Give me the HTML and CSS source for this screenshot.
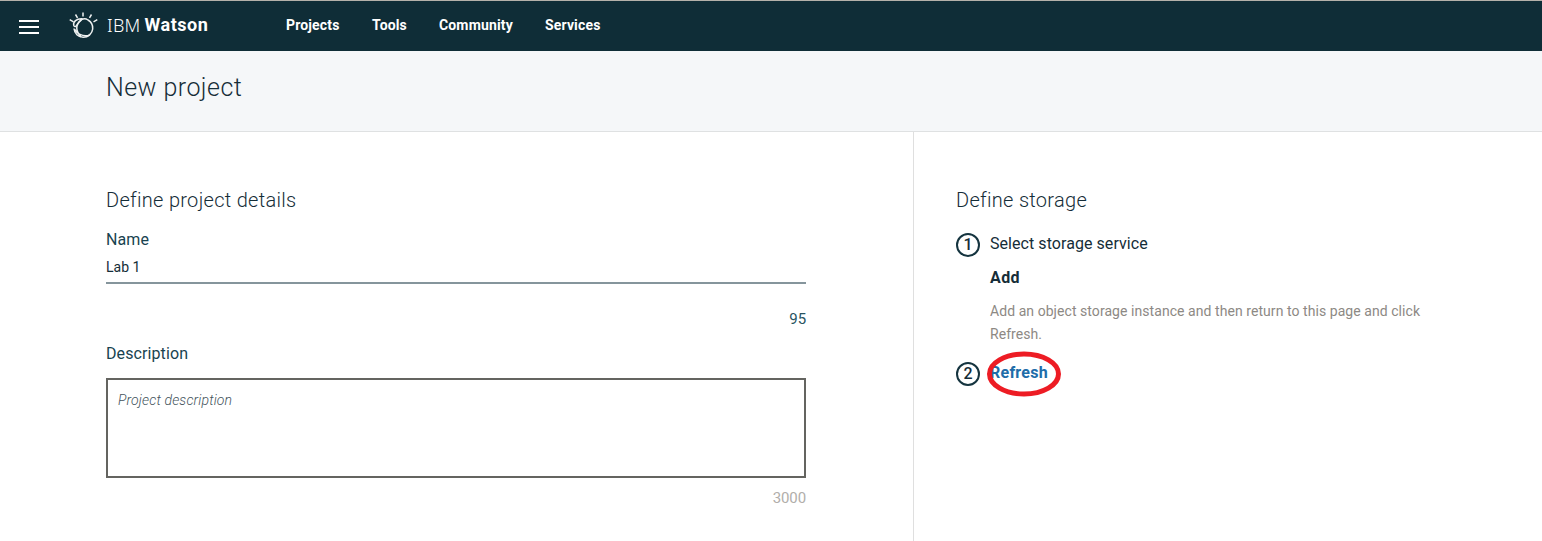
FILE: index.html
```html
<!DOCTYPE html>
<html lang="en">
<head>
<meta charset="utf-8">
<title>New project - IBM Watson</title>
<link rel="stylesheet" href="styles.css">
</head>
<body>
<header class="topbar">
  <svg class="menu" width="20" height="14" viewBox="0 0 20 14"><path d="M0 1h20M0 7h20M0 13h20" stroke="#fff" stroke-width="2"/></svg>
  <svg class="logo" width="30" height="28" viewBox="0 0 30 28" fill="none" stroke="#eef1f1">
    <g stroke-width="1.5"><path d="M14 .5v4M6.500 2.500l2 3.300M22.500 2.500l-2 3.300M.7 7.700l3.800 2.200M28.300 7.700l-3.800 2.200"/>
    <path d="M13.500 6.800C7.500 6.300 3.700 10 4.800 13.500c.8 1.700 2.700 1.300 3.200-.7C10 8.500 14.500 5 19 8c3.500 2 5 5 4.700 9-.5 4.500-4.500 8.300-9.500 8.300S5.500 21.500 5 16.500"/>
    <path d="M5.500 17c1.500 4 8 8.300 15 6.200M12.500 8C6 13 6.500 18.500 12 25"/></g>
  </svg>
  <div class="brand"><span class="ibm">IBM</span><b>Watson</b></div>
  <nav class="nav"><a class="n1">Projects</a><a class="n2">Tools</a><a class="n3">Community</a><a class="n4">Services</a></nav>
</header>
<div class="titlebar"><h1>New project</h1></div>
<main class="content">
  <section class="details">
    <h2>Define project details</h2>
    <div class="label name">Name</div>
    <div class="input">Lab 1</div>
    <div class="count">95</div>
    <div class="label desc">Description</div>
    <div class="area">Project description</div>
    <div class="count limit">3000</div>
  </section>
  <section class="storage">
    <h2>Define storage</h2>
    <div class="step"><span class="num">1</span><span class="select">Select storage service</span></div>
    <div class="add">Add</div>
    <p class="hint">Add an object storage instance and then return to this page and click<br>Refresh.</p>
    <div class="step second"><span class="num">2</span><a class="refresh">Refresh<svg class="ring" width="76" height="48" viewBox="0 0 76 48"><ellipse cx="38" cy="24" rx="34.500" ry="20" fill="none" stroke="#ed1c24" stroke-width="5"/></svg></a></div>
  </section>
</main>
</body>
</html>
```
FILE: styles.css
```css
* { box-sizing: border-box; }
body { margin: 0; height: 541px; overflow: hidden; display: flex; flex-direction: column; background: #fff; color: #152d38; font: 16px/20px Roboto, "Noto Sans", sans-serif; }
h1, h2, p { margin: 0; font-weight: 400; }
.topbar { height: 51px; flex: none; border-top: 1px solid #b5b1aa; background: #0f2d37; color: #fff; display: flex; align-items: flex-start; padding-left: 19px; white-space: nowrap; }
.menu { margin-top: 19px; }
.logo { margin: 11px 0 0 30px; }
.brand { margin: 14px 0 0 8px; width: 179px; font-size: 18px; letter-spacing: .5px; display: flex; }
.ibm { font: 300 18px/20px "Noto Sans", sans-serif; letter-spacing: .3px; margin-right: 4px; }
.nav { display: flex; margin-top: 14px; font-size: 14px; font-weight: 700; letter-spacing: .15px; }
.n1 { width: 86px; }
.n2 { width: 67px; }
.n3 { width: 106px; }
.titlebar { height: 81px; flex: none; background: #f5f7f9; border-bottom: 1px solid #dfe1e2; padding: 22px 106px; }
h1 { font-size: 25px; font-weight: 300; line-height: 30px; letter-spacing: .45px; }
.content { flex: 1; display: flex; min-height: 0; }
.details { width: 914px; padding: 56px 107px 0 106px; border-right: 1px solid #dfdfdf; }
.details > * { width: 700px; }
h2 { font-size: 20px; font-weight: 300; line-height: 24px; letter-spacing: .3px; }
.label { color: #184350; letter-spacing: .1px; }
.name { margin-top: 18px; }
.input { height: 34px; padding-top: 7px; border-bottom: 2px solid #85959c; font-size: 14px; }
.count { margin-top: 25px; text-align: right; font-size: 15px; letter-spacing: -.1px; color: #285361; }
.desc { margin-top: 15px; }
.area { height: 100px; margin-top: 14px; padding: 10px; border: 2px solid #646460; font-size: 14px; letter-spacing: .15px; font-style: italic; font-weight: 300; color: #43535b; }
.limit { margin-top: 10px; color: #b1aeaa; }
.storage { padding: 56px 0 0 42px; }
.step { display: flex; height: 24px; margin-top: 21px; line-height: 22px; letter-spacing: .06px; }
.num { width: 24px; height: 24px; border: 2px solid #15343f; border-radius: 50%; margin-right: 10px; text-align: center; line-height: 19px; font-size: 16px; font-weight: 500; letter-spacing: 0; }
.add { margin: 11px 0 0 34px; font-weight: 700; letter-spacing: .4px; }
.hint { margin: 12px 0 0 34px; font-size: 14px; line-height: 23px; letter-spacing: .06px; color: #8d8984; white-space: nowrap; }
.second { margin-top: 16px; }
.refresh { position: relative; color: #206ca9; font-weight: 700; letter-spacing: .25px; }
.ring { position: absolute; left: -4px; top: -12px; }
```
